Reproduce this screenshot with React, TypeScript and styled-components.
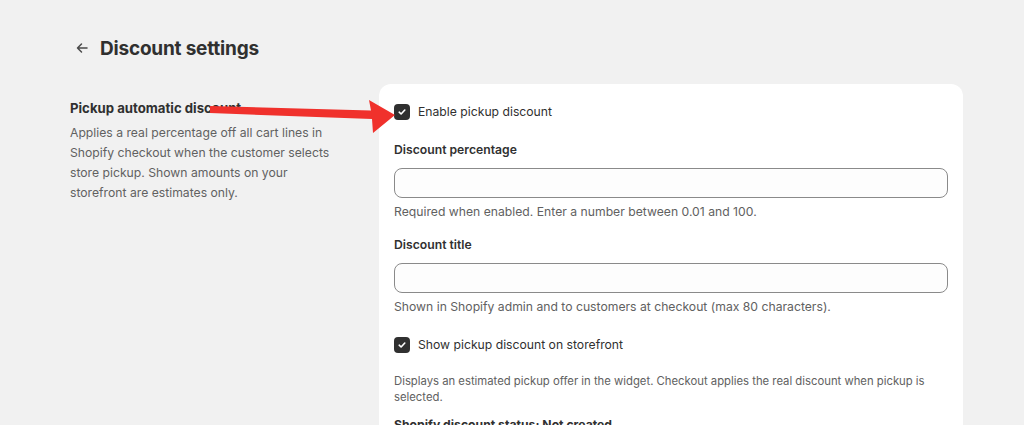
import styled, { createGlobalStyle } from "styled-components";

const GlobalStyle = createGlobalStyle`
  html, body {
    margin: 0;
    padding: 0;
    background: #f1f1f1;
  }
  body {
    font-family: Inter, "Noto Sans", "Liberation Sans", sans-serif;
    color: #303030;
    -webkit-font-smoothing: antialiased;
  }
`;

interface CheckboxProps {
  checked: boolean;
  label: string;
}

const Checkbox = ({ checked, label }: CheckboxProps) => (
  <CheckRow>
    <Box $checked={checked}>
      {checked && (
        <svg width="10" height="10" viewBox="0 0 10 10" fill="none">
          <path
            d="M2.2 5.2 4.1 7 7.8 3"
            stroke="#fff"
            strokeWidth="1.6"
            strokeLinecap="round"
            strokeLinejoin="round"
          />
        </svg>
      )}
    </Box>
    <CheckLabel>{label}</CheckLabel>
  </CheckRow>
);

// red callout arrow pointing at the first checkbox
const PointerArrow = () => (
  <ArrowLayer width="1024" height="425" viewBox="0 0 1024 425">
    <polygon
      points="210,106 371,110.5 369,100 395,115 373,133 372,119 210,113"
      fill="#f0312c"
    />
  </ArrowLayer>
);

export default function App() {
  return (
    <>
      <GlobalStyle />
      <Page>
        <Header>
          <BackButton aria-label="Back">
            <svg width="14" height="14" viewBox="0 0 14 14" fill="none">
              <path
                d="M12 7H2.5M6.5 3 2.5 7l4 4"
                stroke="#4a4a4a"
                strokeWidth="1.5"
                strokeLinecap="round"
                strokeLinejoin="round"
              />
            </svg>
          </BackButton>
          <Title>Discount settings</Title>
        </Header>

        <Section>
          <Aside>
            <AsideTitle>Pickup automatic discount</AsideTitle>
            <AsideText>
              Applies a real percentage off all cart lines in Shopify checkout
              when the customer selects store pickup. Shown amounts on your
              <br />
              storefront are estimates only.
            </AsideText>
          </Aside>

          <Card>
            <Checkbox checked label="Enable pickup discount" />

            <Field>
              <FieldLabel>Discount percentage</FieldLabel>
              <Input type="text" />
              <HelpText>
                Required when enabled. Enter a number between 0.01 and 100.
              </HelpText>
            </Field>

            <Field>
              <FieldLabel>Discount title</FieldLabel>
              <Input type="text" />
              <HelpText>
                Shown in Shopify admin and to customers at checkout (max 80
                characters).
              </HelpText>
            </Field>

            <Spacer />
            <Checkbox checked label="Show pickup discount on storefront" />

            <Note>
              Displays an estimated pickup offer in the widget. Checkout applies
              the real discount when pickup is selected.
            </Note>

            <Status>Shopify discount status: Not created</Status>
          </Card>
        </Section>

        <PointerArrow />
      </Page>
    </>
  );
}

const Page = styled.div`
  position: relative;
  padding: 30px 0 0 70px;
  height: 425px;
  box-sizing: border-box;
  overflow: hidden;
`;

const Header = styled.div`
  display: flex;
  align-items: center;
  gap: 10px;
  height: 36px;
  margin-left: 4px;
`;

const BackButton = styled.button`
  display: flex;
  align-items: center;
  justify-content: center;
  width: 16px;
  height: 28px;
  padding: 0;
  border: none;
  background: none;
  cursor: pointer;
`;

const Title = styled.h1`
  margin: 0;
  font-size: 19px;
  font-weight: 700;
  color: #303030;
  letter-spacing: -0.2px;
`;

const Section = styled.div`
  display: grid;
  grid-template-columns: 289px 584px;
  column-gap: 20px;
  margin-top: 18px;
`;

const Aside = styled.div`
  padding-top: 14px;
`;

const AsideTitle = styled.h2`
  margin: 0 0 5px;
  font-size: 13.2px;
  font-weight: 650;
  line-height: 20px;
  color: #303030;
`;

const AsideText = styled.p`
  margin: 0;
  max-width: 266px;
  font-size: 12.2px;
  line-height: 20px;
  color: #616161;
`;

const Card = styled.div`
  background: #fff;
  border-radius: 12px;
  padding: 16px 15px 24px;
  box-shadow: 0 1px 0 rgba(26, 26, 26, 0.07);
  display: flex;
  flex-direction: column;
`;

const CheckRow = styled.label`
  display: flex;
  align-items: center;
  gap: 8px;
  height: 24px;
  cursor: pointer;
`;

const Box = styled.span<{ $checked: boolean }>`
  display: flex;
  align-items: center;
  justify-content: center;
  width: 16px;
  height: 16px;
  border-radius: 4px;
  box-sizing: border-box;
  background: ${(p) => (p.$checked ? "#303030" : "#fff")};
  border: ${(p) => (p.$checked ? "none" : "1px solid #8a8a8a")};
`;

const CheckLabel = styled.span`
  font-size: 12.2px;
  line-height: 20px;
  color: #303030;
`;

const Field = styled.div`
  display: flex;
  flex-direction: column;
  margin-top: 16px;

  & + & {
    margin-top: 13px;
  }
`;

const Spacer = styled.div`
  height: 16px;
`;

const FieldLabel = styled.span`
  font-size: 12.2px;
  font-weight: 600;
  line-height: 20px;
  color: #303030;
  margin-bottom: 8px;
`;

const Input = styled.input`
  height: 30px;
  box-sizing: border-box;
  border: 1px solid #8a8a8a;
  border-radius: 8px;
  background: #fdfdfd;
  padding: 0 12px;
  font: inherit;
  font-size: 12.2px;
  outline: none;
`;

const HelpText = styled.span`
  margin-top: 4px;
  font-size: 12.2px;
  line-height: 20px;
  color: #616161;
`;

const Note = styled.p`
  margin: 16px 0 0;
  font-size: 11.3px;
  line-height: 16px;
  color: #616161;
`;

const Status = styled.p`
  margin: 10px 0 0;
  font-size: 12.2px;
  font-weight: 650;
  line-height: 20px;
  color: #303030;
`;

const ArrowLayer = styled.svg`
  position: absolute;
  left: 0;
  top: 0;
  pointer-events: none;
`;
